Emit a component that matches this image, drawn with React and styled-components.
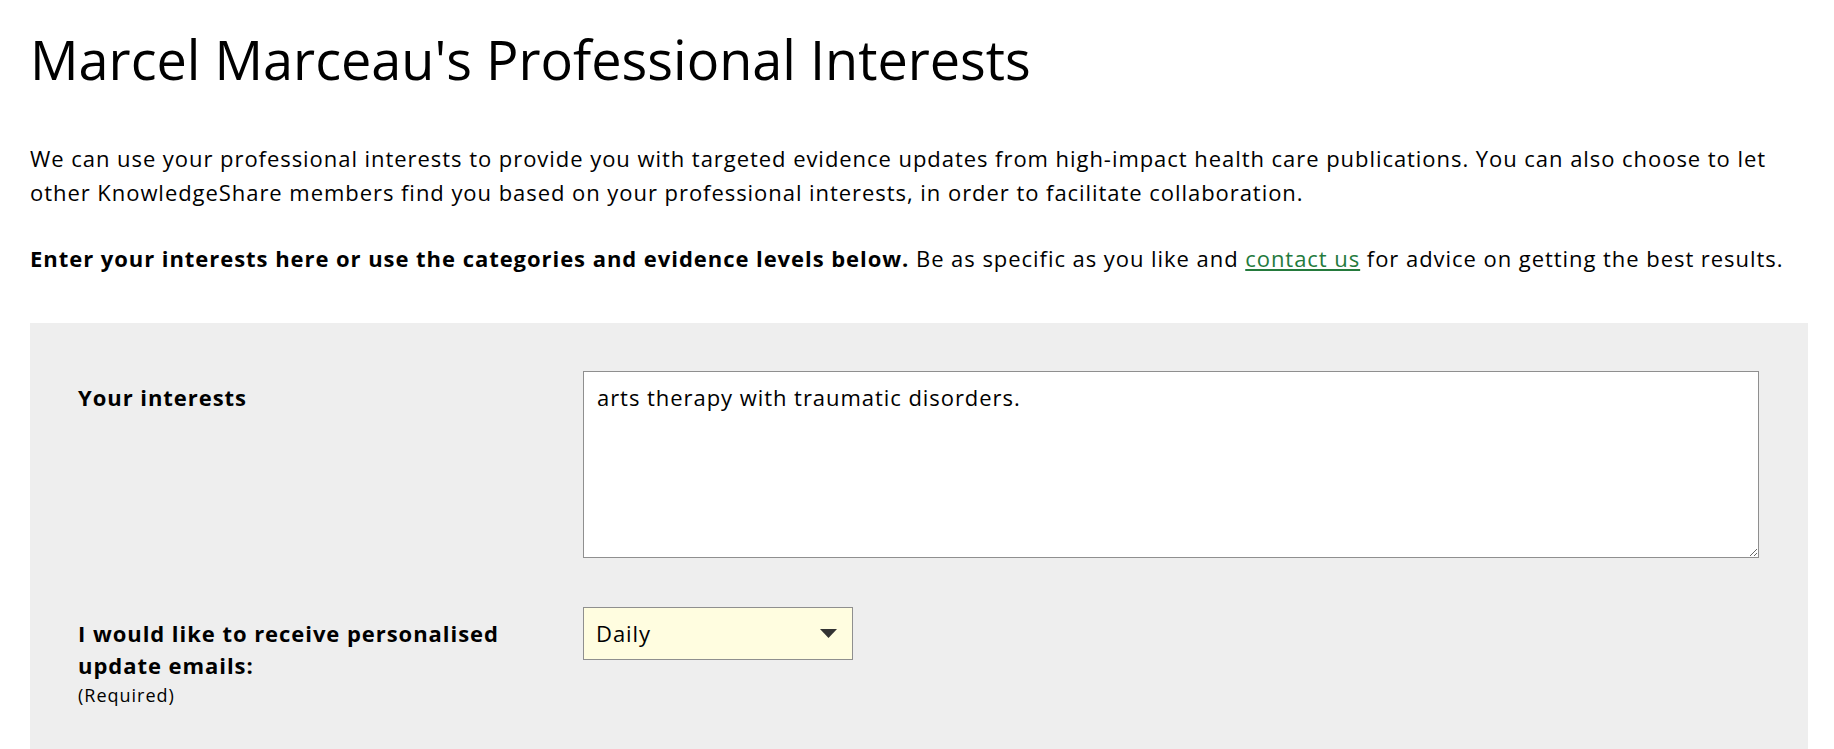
import React from "react";
import styled, { createGlobalStyle } from "styled-components";

const GlobalStyle = createGlobalStyle`
  body {
    margin: 0;
    background: #fff;
    color: #000;
    font-family: "Open Sans", "Noto Sans", sans-serif;
  }
`;

const App = () => {
  return (
    <Page>
      <GlobalStyle />
      <Title>Marcel Marceau's Professional Interests</Title>
      <Intro>
        We can use your professional interests to provide you with targeted
        evidence updates from high-impact health care publications. You can
        also choose to let other KnowledgeShare members find you based on your
        professional interests, in order to facilitate collaboration.
      </Intro>
      <Intro $gap="32px">
        <strong>
          Enter your interests here or use the categories and evidence levels
          below.
        </strong>{" "}
        Be as specific as you like and <Link href="#">contact us</Link> for
        advice on getting the best results.
      </Intro>

      <Panel>
        <FieldRow>
          <Label>Your interests</Label>
          <Interests defaultValue="arts therapy with traumatic disorders." />
        </FieldRow>

        <FieldRow>
          <Label>
            I would like to receive personalised update emails:
            <Required>(Required)</Required>
          </Label>
          <SelectWrap>
            <Select defaultValue="daily">
              <option value="daily">Daily</option>
              <option value="weekly">Weekly</option>
              <option value="monthly">Monthly</option>
              <option value="never">Never</option>
            </Select>
            <Caret viewBox="0 0 17 9">
              <path d="M0 0 H17 L8.5 9 Z" fill="#333" />
            </Caret>
          </SelectWrap>
        </FieldRow>
      </Panel>
    </Page>
  );
};

const Page = styled.div`
  padding: 27px 26px 0 30px;
`;

const Title = styled.h1`
  margin: 0 0 49px;
  font-size: 54px;
  font-weight: 400;
  line-height: 1.2;
`;

const Intro = styled.p`
  margin: ${(p) => p.$gap || "0"} 0 0;
  font-size: 22px;
  letter-spacing: 0.95px;
  line-height: 34px;

  strong {
    font-weight: 700;
  }
`;

const Link = styled.a`
  color: #247a3c;
  text-decoration: underline;
`;

const Panel = styled.div`
  margin-top: 48px;
  background: #eeeeee;
  padding: 48px 49px 90px 48px;
  display: flex;
  flex-direction: column;
  gap: 49px;
`;

const FieldRow = styled.div`
  display: grid;
  grid-template-columns: 505px 1fr;
  align-items: start;
`;

const Label = styled.div`
  padding-top: 10px;
  width: 460px;
  font-size: 22px;
  letter-spacing: 0.95px;
  font-weight: 700;
  line-height: 32px;
`;

const Required = styled.span`
  display: block;
  margin-top: 2px;
  font-size: 18px;
  letter-spacing: 1px;
  font-weight: 400;
  line-height: 25px;
`;

const Interests = styled.textarea`
  box-sizing: border-box;
  width: 100%;
  height: 187px;
  padding: 8px 13px;
  border: 1px solid #8f8f8f;
  border-radius: 0;
  background: #fff;
  font-family: "Open Sans", "Noto Sans", sans-serif;
  font-size: 22px;
  letter-spacing: 0.95px;
  line-height: 34px;
  color: #000;
  resize: vertical;
`;

const SelectWrap = styled.div`
  position: relative;
  width: 270px;
`;

const Select = styled.select`
  box-sizing: border-box;
  width: 270px;
  height: 53px;
  padding: 0 40px 0 12px;
  border: 1px solid #8f8f8f;
  border-radius: 0;
  background: #fffde0;
  appearance: none;
  font-family: "Open Sans", "Noto Sans", sans-serif;
  font-size: 22px;
  letter-spacing: 0.95px;
  color: #000;
`;

const Caret = styled.svg`
  position: absolute;
  top: 22px;
  right: 16px;
  width: 17px;
  height: 9px;
  pointer-events: none;
`;

export default App;
